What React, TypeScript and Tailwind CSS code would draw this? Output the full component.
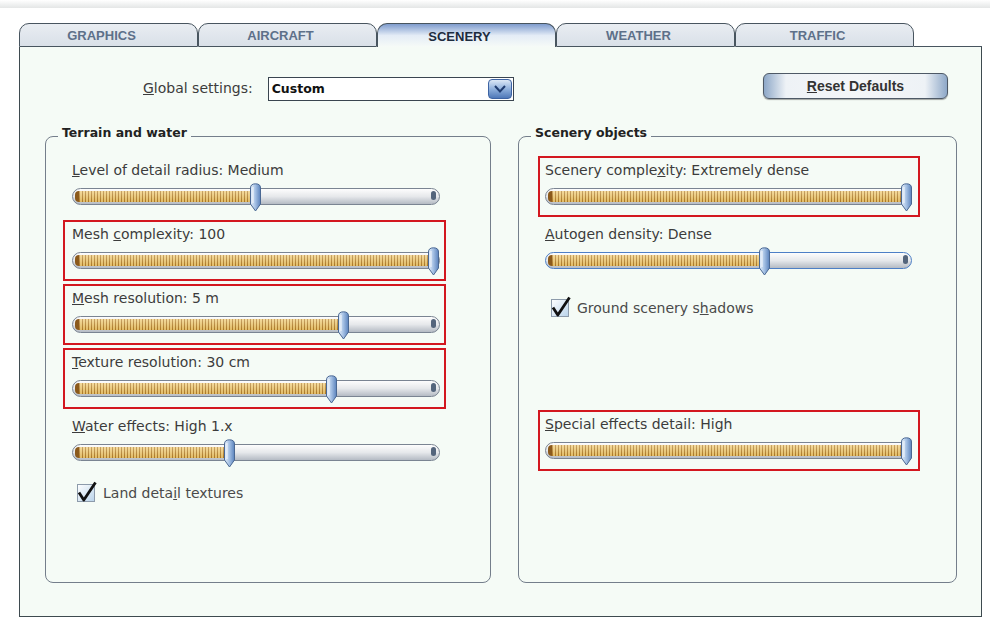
import React from "react"

const tabs = ["GRAPHICS", "AIRCRAFT", "SCENERY", "WEATHER", "TRAFFIC"]

function Thumb({ left }: { left: number }) {
  return (
    <svg
      className="absolute top-[-6px]"
      style={{ left }}
      width="13"
      height="29"
      viewBox="0 0 13 29"
    >
      <defs>
        <linearGradient id="thumbg" x1="0" y1="0" x2="1" y2="0">
          <stop offset="0" stopColor="#e8f1fb" />
          <stop offset="0.45" stopColor="#a9c4e6" />
          <stop offset="1" stopColor="#5b83bd" />
        </linearGradient>
      </defs>
      <path
        d="M1.5 5 Q1.5 0.8 6.5 0.8 Q11.5 0.8 11.5 5 L11.5 21 L6.5 28 L1.5 21 Z"
        fill="url(#thumbg)"
        stroke="#4a6893"
        strokeWidth="1"
      />
      <path d="M4 4 L4 20" stroke="#ffffff" strokeOpacity="0.7" strokeWidth="1.2" />
    </svg>
  )
}

function Track({ pos, focused }: { pos: number; focused?: boolean }) {
  return (
    <div
      className={`relative mt-[9px] flex h-[17px] items-stretch rounded-full border bg-gradient-to-b from-[#fdfdfd] via-[#e6e8eb] to-[#b5bbc4] p-[2px] ${
        focused ? "border-[#4d7fc6]" : "border-[#7a8492]"
      }`}
    >
      <div className="w-[4px] rounded-l-full bg-[#8b5a1c]" />
      <div
        className="bg-[linear-gradient(180deg,rgba(255,255,255,0.3),rgba(120,70,0,0.12)),repeating-linear-gradient(90deg,#b17d28_0px,#b17d28_1px,#efcb74_1px,#efcb74_3px)]"
        style={{ width: pos - 7 }}
      />
      <span className="absolute right-[3px] top-[2px] h-[9px] w-[5px] rounded-full bg-[#54657c]" />
      <Thumb left={pos - 7} />
    </div>
  )
}

function SliderRow({
  label,
  pos,
  red,
  right,
  focused,
}: {
  label: React.ReactNode
  pos: number
  red?: boolean
  right?: boolean
  focused?: boolean
}) {
  return (
    <div
      className={`h-[61px] border-2 pt-[3px] ${red ? "border-[#d3171f]" : "border-transparent"} ${
        right ? "w-[382px] pl-[5px] pr-[6px]" : "w-[383px] pl-[7px] pr-[4px]"
      }`}
    >
      <div className="text-[14px] leading-[18px] text-[#3c3c3c]">{label}</div>
      <Track pos={pos} focused={focused} />
    </div>
  )
}

function Check({ label }: { label: React.ReactNode }) {
  return (
    <div className="flex items-center gap-[8px]">
      <svg width="18" height="18" viewBox="0 0 18 18" className="overflow-visible">
        <defs>
          <linearGradient id="boxg" x1="0" y1="0" x2="1" y2="1">
            <stop offset="0" stopColor="#ffffff" />
            <stop offset="1" stopColor="#b9d3ea" />
          </linearGradient>
        </defs>
        <rect x="0.5" y="0.5" width="17" height="17" fill="url(#boxg)" stroke="#8d9bab" />
        <path d="M2 8.5 L6.8 16 L18.5 -1.5" fill="none" stroke="#111" strokeWidth="2.8" strokeLinejoin="round" />
      </svg>
      <span className="text-[14px] leading-[18px] text-[#4a4a4a]">{label}</span>
    </div>
  )
}

function Group({ title, children, w }: { title: string; children: React.ReactNode; w: string }) {
  return (
    <fieldset className={`h-[458px] rounded-[8px] border border-[#747e8b] p-0 ${w}`}>
      <legend className="ml-[12px] px-[4px] pb-[6px] text-[12.5px] font-bold leading-[16px] text-[#222]">
        {title}
      </legend>
      {children}
    </fieldset>
  )
}

export default function App() {
  return (
    <div className="h-[626px] w-[990px] overflow-hidden bg-white font-['DejaVu_Sans',sans-serif]">
      <div className="h-[8px] bg-gradient-to-b from-white to-[#e4e6e6]" />
      <div className="pl-[19px] pr-[8px] pt-[15px]">
        <div className="flex h-[24px]">
          {tabs.map((t) => {
            const sel = t === "SCENERY"
            return (
              <div
                key={t}
                className={`flex w-[179px] items-center justify-center rounded-t-[10px] border pr-[14px] pt-[2px] font-['Liberation_Sans',sans-serif] text-[13px] font-bold ${
                  sel
                    ? "border-[#48555f] border-b-0 bg-gradient-to-b from-[#7f9ccd] via-[#e4ecf6] to-[#f6fbf7] text-[#1d2b3e]"
                    : "border-[#48555f] bg-gradient-to-b from-[#e9edf2] to-[#d9e0e8] text-[#5d7089]"
                }`}
              >
                {t}
              </div>
            )
          })}
          <div className="flex-1 border-b border-[#48555f]" />
        </div>
        <div className="h-[570px] border-x border-b border-[#3e4a4f] bg-[#f5fbf6] pt-[26px]">
          <div className="flex h-[27px] items-start">
            <span className="ml-[123px] mt-[6px] text-[14px] leading-[18px] text-[#3c3c3c]">
              <u>G</u>lobal settings:
            </span>
            <div className="ml-[15px] mt-[4px] flex h-[24px] w-[246px] items-stretch border border-[#3a4550] bg-white">
              <span className="flex-1 pl-[3px] text-[12.5px] font-bold leading-[22px] text-[#111]">Custom</span>
              <div className="m-px flex w-[24px] items-center justify-center rounded-[4px] border border-[#3d63a3] bg-gradient-to-b from-[#dce8f6] via-[#8fb0dc] to-[#4f78b8]">
                <svg width="12" height="8" viewBox="0 0 12 8">
                  <path d="M1 1 L6 6.5 L11 1" fill="none" stroke="#1f3c70" strokeWidth="2" />
                </svg>
              </div>
            </div>
            <button className="ml-auto mr-[33px] h-[26px] w-[185px] rounded-[6px] border border-[#4e5966] bg-[linear-gradient(90deg,#8ea8c8_0%,#eef2f6_12%,#f4f6f8_50%,#eef2f6_88%,#8ea8c8_100%)] font-['Liberation_Sans',sans-serif] text-[14px] font-bold text-[#333] shadow-[0_1px_1px_rgba(0,0,0,0.35)]">
              <u>R</u>eset Defaults
            </button>
          </div>
          <div className="mt-[25px] flex gap-[27px] pl-[25px]">
            <Group title="Terrain and water" w="w-[446px]">
              <div className="flex flex-col gap-[3px] pl-[17px] pt-[9px]">
                <SliderRow label={<><u>L</u>evel of detail radius: Medium</>} pos={183} />
                <SliderRow label={<>Mesh <u>c</u>omplexity: 100</>} pos={361} red />
                <SliderRow label={<><u>M</u>esh resolution: 5 m</>} pos={271} red />
                <SliderRow label={<><u>T</u>exture resolution: 30 cm</>} pos={259} red />
                <SliderRow label={<><u>W</u>ater effects: High 1.x</>} pos={157} />
                <div className="ml-[14px] mt-[8px]">
                  <Check label={<>Land deta<u>i</u>l textures</>} />
                </div>
              </div>
            </Group>
            <Group title="Scenery objects" w="w-[439px]">
              <div className="flex flex-col pl-[19px] pt-[9px]">
                <SliderRow label={<>Scenery comple<u>x</u>ity: Extremely dense</>} pos={361} red right />
                <div className="mt-[3px]">
                  <SliderRow label={<><u>A</u>utogen density: Dense</>} pos={219} right focused />
                </div>
                <div className="ml-[13px] mt-[18px]">
                  <Check label={<>Ground scenery s<u>h</u>adows</>} />
                </div>
                <div className="mt-[93px]">
                  <SliderRow label={<><u>S</u>pecial effects detail: High</>} pos={361} red right />
                </div>
              </div>
            </Group>
          </div>
        </div>
      </div>
    </div>
  )
}
